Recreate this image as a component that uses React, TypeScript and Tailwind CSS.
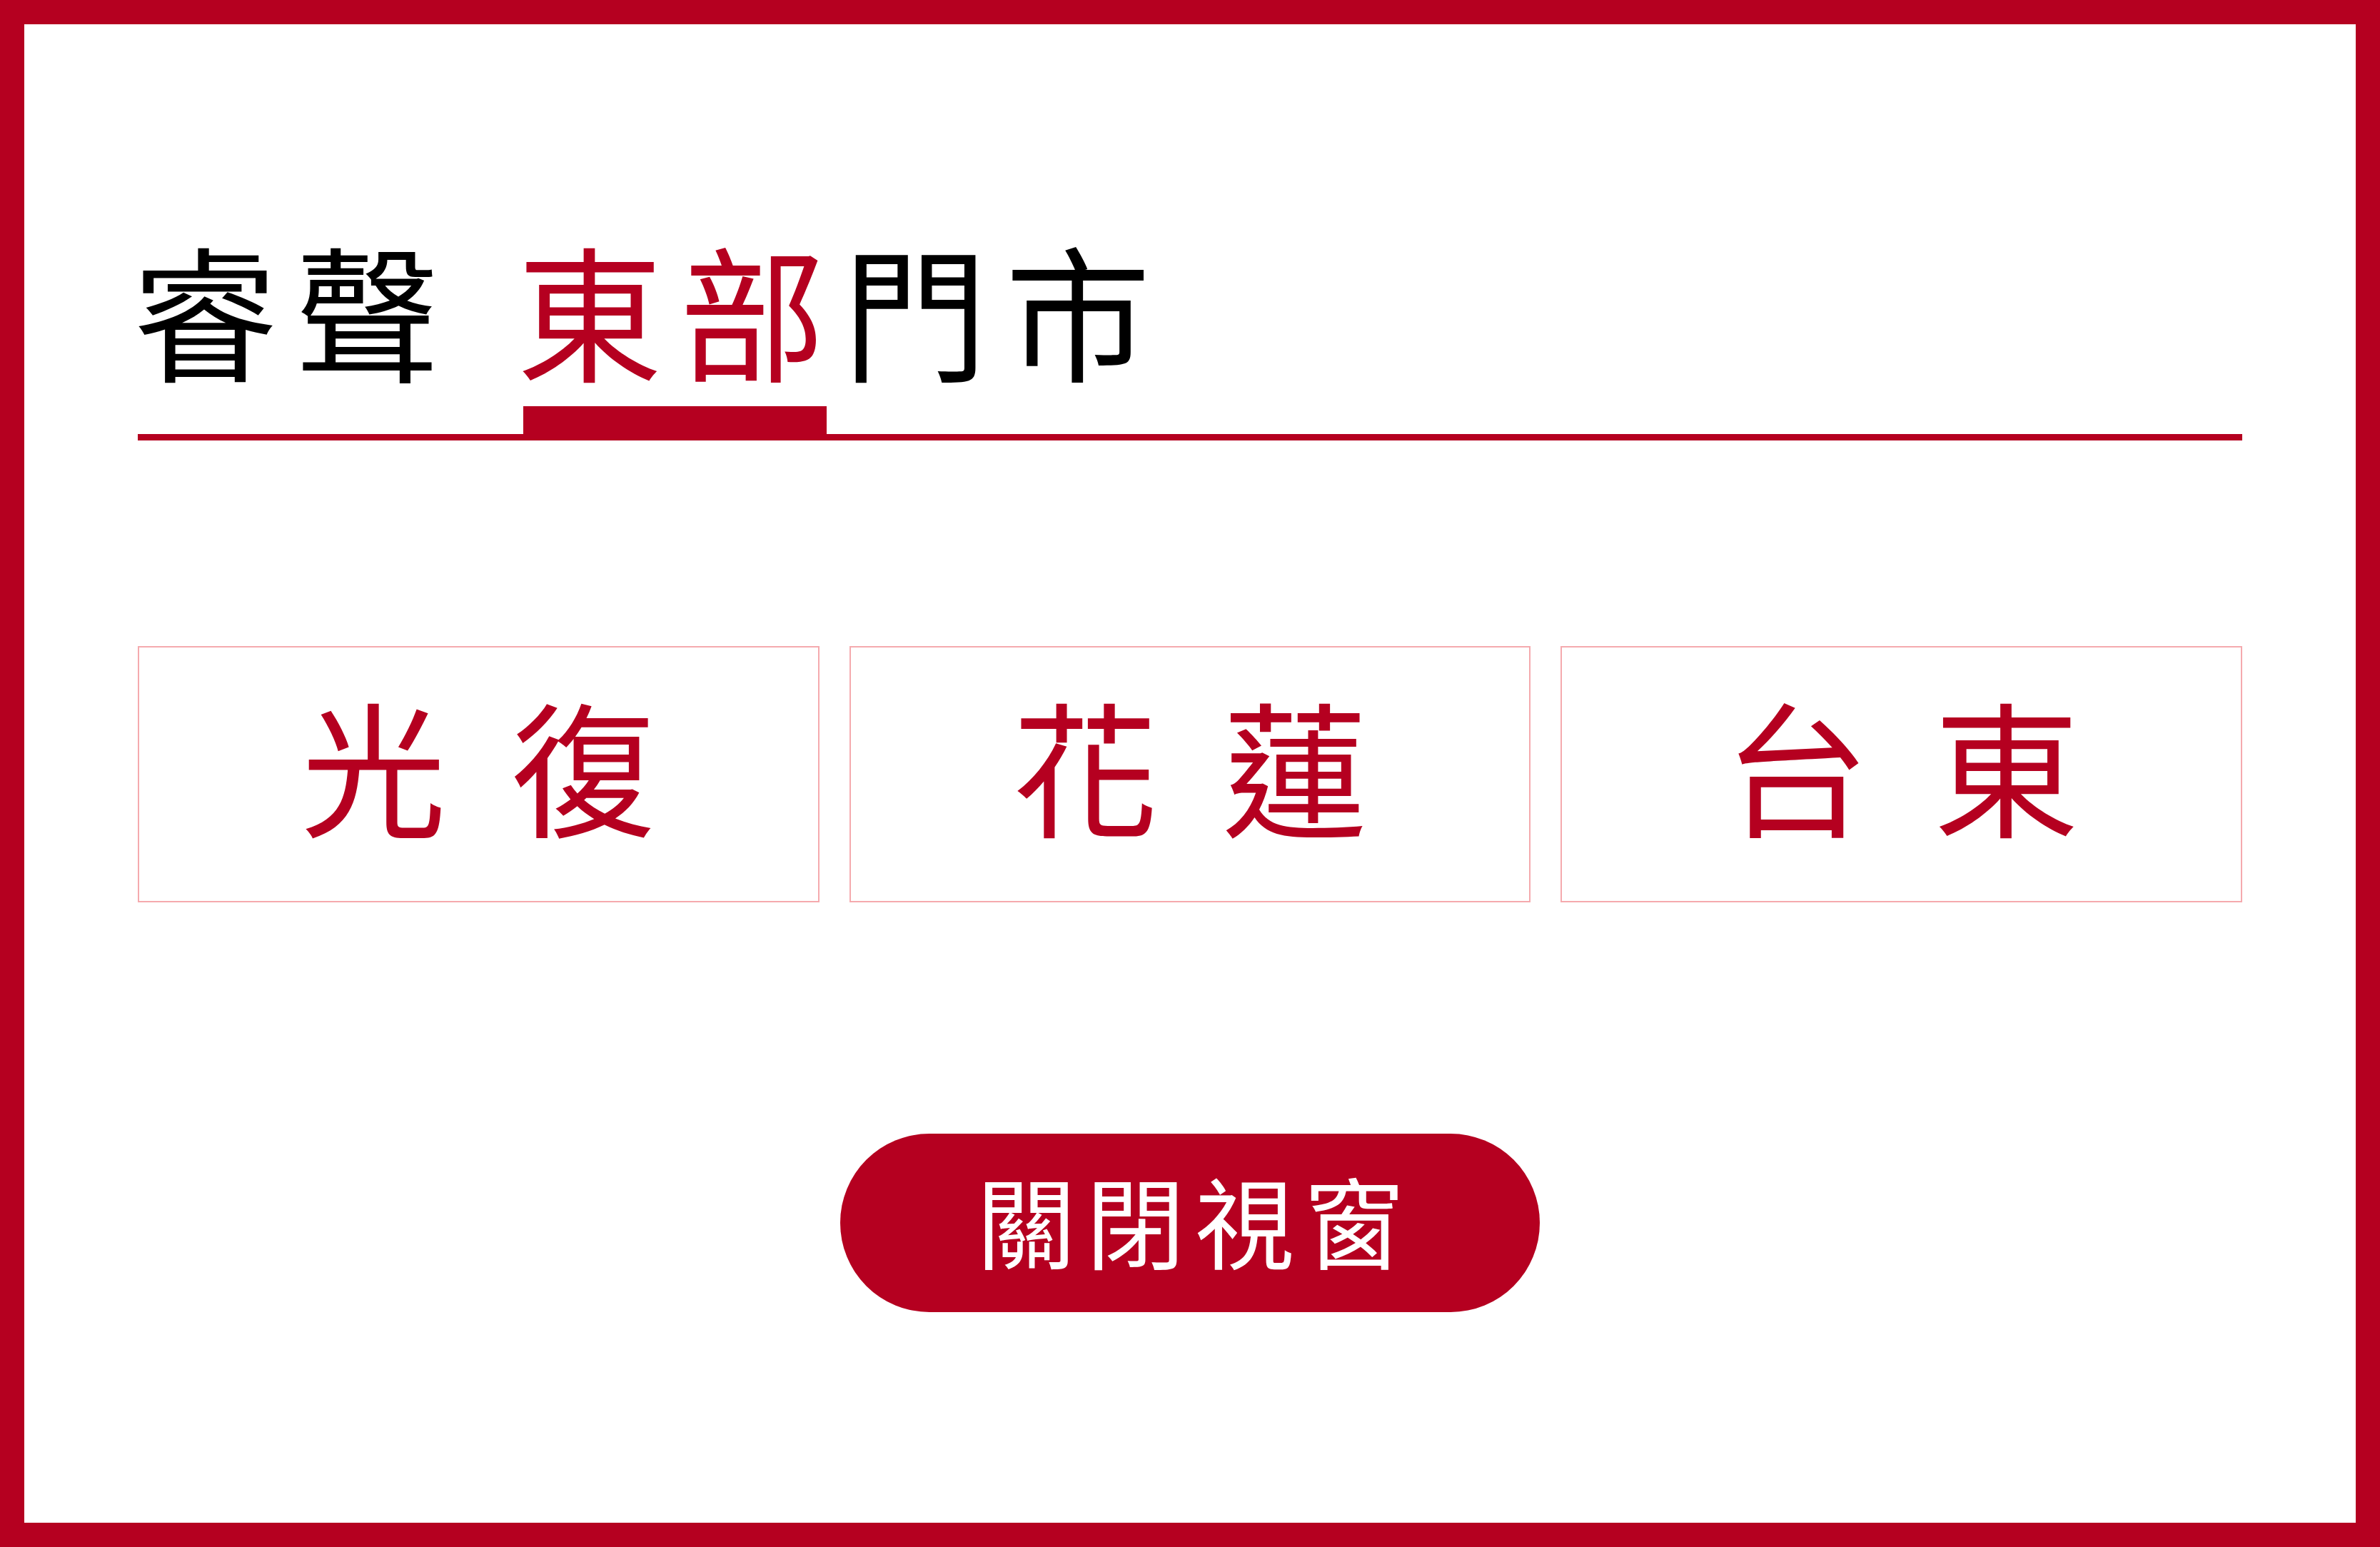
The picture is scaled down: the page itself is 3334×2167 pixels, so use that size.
import React from 'react';

const stores = ['光 復', '花 蓮', '台 東'];

export default function App() {
  return (
    <div
      className="w-full h-[2167px] border-[34px] border-[#b50020] bg-white px-[159px] pt-[295px]"
      style={{ fontFamily: '"Noto Sans CJK TC", "Noto Sans", sans-serif' }}
    >
      {/* title */}
      <div className="-ml-[8px] flex items-start text-[204px] leading-none tracking-[24px]">
        <span className="text-black">睿聲</span>
        <div className="ml-[83px] flex flex-col">
          <span className="text-[#b50020]">東部</span>
          <div className="mt-[36px] ml-[9px] h-[39px] w-[425px] bg-[#b50020]" />
        </div>
        <span className="text-black">門市</span>
      </div>
      <div className="h-[9px] bg-[#b50020]" />

      {/* store list */}
      <div className="mt-[288px] grid grid-cols-3 gap-[42px]">
        {stores.map((name) => (
          <button
            key={name}
            className="h-[359px] border-2 border-[#f5aaae] flex items-center justify-center pl-[22px] pb-[32px] text-[204px] leading-none tracking-[22px] text-[#b50020] whitespace-pre"
          >
            {name}
          </button>
        ))}
      </div>

      <div className="mt-[324px] flex justify-center">
        <button className="w-[980px] h-[250px] rounded-full bg-[#b50020] text-white text-[139px] leading-none tracking-[14px] pl-[14px] pb-[14px] flex items-center justify-center">
          關閉視窗
        </button>
      </div>
    </div>
  );
}
